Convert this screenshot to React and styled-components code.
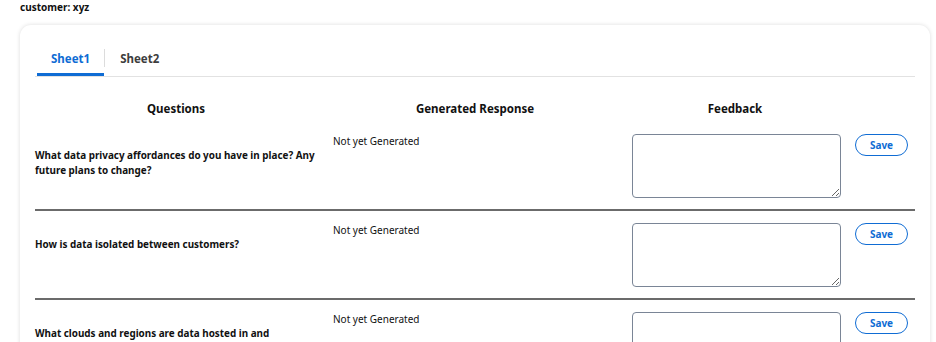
import React from "react";
import styled, { createGlobalStyle } from "styled-components";

const Global = createGlobalStyle`
  html, body { margin: 0; padding: 0; background: #fff; }
  body { font-family: "Noto Sans", "Open Sans", sans-serif; color: #161616; }
  * { box-sizing: border-box; }
`;

const Page = styled.div`
  padding: 1px 6px 0 20px;
`;

const Customer = styled.div`
  font-size: 10px;
  font-weight: 700;
  line-height: 12px;
  color: #111;
`;

const Card = styled.div`
  margin-top: 12px;
  background: #fff;
  border-radius: 11px;
  box-shadow: 0 0 4px rgba(0, 0, 0, 0.14);
  padding: 16px 15px 0 15px;
  height: 330px;
  width: 910px;
  overflow: hidden;
`;

const Tabs = styled.div`
  display: flex;
  align-items: center;
  border-bottom: 1px solid #e2e2e2;
  height: 36px;
`;

const Tab = styled.div`
  height: 100%;
  display: flex;
  align-items: center;
  justify-content: center;
  padding: 0 ${(p) => (p.$first ? "14px" : "15px")};
  margin-left: ${(p) => (p.$first ? "2px" : "0")};
  font-size: 11.5px;
  font-weight: 700;
  color: ${(p) => (p.$active ? "#0f6cd4" : "#3d3d3d")};
  border-bottom: 3px solid ${(p) => (p.$active ? "#0f6cd4" : "transparent")};
  border-top: 3px solid transparent;
`;

const TabDivider = styled.div`
  width: 1px;
  height: 18px;
  background: #dcdcdc;
  margin: 0 0 2px 0;
`;

const Grid = styled.div`
  display: grid;
  grid-template-columns: 290px 300px 225px 65px;
`;

const HeadCell = styled.div`
  text-align: center;
  font-size: 11.5px;
  font-weight: 700;
  padding: 24px ${(p) => p.$pr ?? 8}px 6px ${(p) => p.$pl ?? 8}px;
  line-height: 15px;
  color: #111;
`;

const Row = styled.div`
  display: contents;
`;

const Cell = styled.div`
  padding: ${(p) => p.$pt ?? 12}px ${(p) => p.$pr ?? 8}px 11px ${(p) => p.$pl ?? 8}px;
  border-bottom: 2px solid #6b6b6b;
  display: flex;
  align-items: flex-start;
  min-height: 89px;
`;

const Question = styled.div`
  font-size: 9.9px;
  font-weight: 700;
  line-height: 15px;
  color: #111;
`;

const Response = styled.div`
  font-size: 10px;
  line-height: 14px;
  color: #111;
`;

const Feedback = styled.textarea`
  display: block;
  flex-shrink: 0;
  width: 209px;
  height: 64px;
  border: 1.5px solid #7a8596;
  border-radius: 4px;
  margin: 0;
  font-family: inherit;
`;

const SaveButton = styled.button`
  display: block;
  flex-shrink: 0;
  width: 53px;
  height: 22px;
  border: 1.5px solid #0f6cd4;
  border-radius: 11px;
  background: #fff;
  color: #0f6cd4;
  font-family: inherit;
  font-size: 10px;
  font-weight: 700;
  padding: 0;
  cursor: pointer;
`;

const rows = [
  "What data privacy affordances do you have in place? Any future plans to change?",
  "How is data isolated between customers?",
  "What clouds and regions are data hosted in and transferred between?",
];

export default function App() {
  return (
    <>
      <Global />
      <Page>
        <Customer>customer: xyz</Customer>
        <Card>
          <Tabs>
            <Tab $active $first>Sheet1</Tab>
            <TabDivider />
            <Tab>Sheet2</Tab>
          </Tabs>
          <Grid>
            <HeadCell $pl={0}>Questions</HeadCell>
            <HeadCell>Generated Response</HeadCell>
            <HeadCell $pr={13}>Feedback</HeadCell>
            <HeadCell />
            {rows.map((q) => (
              <Row key={q}>
                <Cell $pl={0} $pr={4} $pt={26}>
                  <Question>{q}</Question>
                </Cell>
                <Cell>
                  <Response>Not yet Generated</Response>
                </Cell>
                <Cell $pl={7} $pr={0}>
                  <Feedback />
                </Cell>
                <Cell $pl={5} $pr={0}>
                  <SaveButton>Save</SaveButton>
                </Cell>
              </Row>
            ))}
          </Grid>
        </Card>
      </Page>
    </>
  );
}
